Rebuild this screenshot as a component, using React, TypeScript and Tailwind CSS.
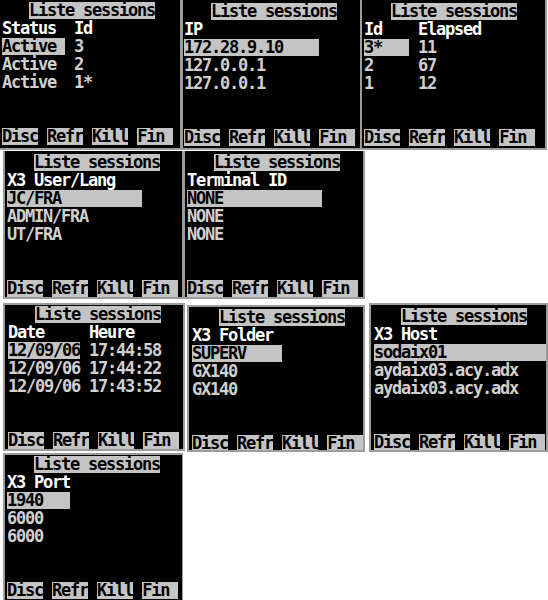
import React, { FC } from "react";

interface ScreenProps {
  header: string;
  rows: string[];
  hl: number;
  className: string;
}

const font = "font-['DejaVu_Sans_Mono',monospace] font-bold text-[17px] tracking-[-1.23px] whitespace-pre";

const Hl: FC<{ children: React.ReactNode }> = ({ children }) => (
  <span className="inline-block h-[17px] leading-[17px] bg-[#c4c4c4] text-black align-top">{children}</span>
);

const Screen: FC<ScreenProps> = ({ header, rows, hl, className }) => {
  return (
    <div className={"bg-black border-[#9c9c9c] overflow-hidden " + className}>
      <div className={"flex flex-col " + font}>
        <div className="h-[18px] leading-[17px]">
          {"   "}
          <Hl>Liste sessions</Hl>
        </div>
        <div className="h-[18px] leading-[17px] text-white">{header}</div>
        {rows.map((r, i) => (
          <div key={i} className="h-[18px] leading-[17px] text-[#d0d0d0]">
            {i === 0 ? (
              <>
                <Hl>{r.padEnd(hl, " ").slice(0, hl)}</Hl>
                {r.slice(hl)}
              </>
            ) : (
              r
            )}
          </div>
        ))}
        <div className="h-[18px]" />
        <div className="h-[18px]" />
        <div className="h-[18px] leading-[17px]">
          <Hl>Disc</Hl> <Hl>Refr</Hl> <Hl>Kill</Hl> <Hl>Fin </Hl>
        </div>
      </div>
    </div>
  );
};

export default function App() {
  return (
    <div className="w-[548px] h-[600px] bg-white overflow-hidden">
      <div className="flex h-[151px]">
        <Screen
          className="w-[182px] h-[150px] pl-[2px] pt-[2px] border-r-2 border-b-2"
          header="Status  Id"
          rows={["Active  3", "Active  2", "Active  1*"]}
          hl={7}
        />
        <Screen
          className="w-[179px] h-[150px] pl-[1px] pt-[3px] border-l border-r border-b-2"
          header="IP"
          rows={["172.28.9.10", "127.0.0.1", "127.0.0.1"]}
          hl={15}
        />
        <Screen
          className="w-[186px] h-[150px] pl-[2px] pt-[3px] border-l border-r-2 border-b-2"
          header="Id    Elapsed"
          rows={["3*    11", "2     67", "1     12"]}
          hl={5}
        />
      </div>
      <div className="flex h-[152px]">
        <Screen
          className="ml-[3px] w-[180px] h-[148px] pl-[2px] pt-[3px] border-l-2 border-r border-b-2"
          header="X3 User/Lang"
          rows={["JC/FRA", "ADMIN/FRA", "UT/FRA"]}
          hl={15}
        />
        <Screen
          className="w-[182px] h-[148px] pl-[2px] pt-[3px] border-l-2 border-r-2 border-b-2"
          header="Terminal ID"
          rows={["NONE", "NONE", "NONE"]}
          hl={15}
        />
      </div>
      <div className="flex items-start h-[150px]">
        <Screen
          className="ml-[3px] w-[182px] h-[148px] pl-[3px] pt-[1px] border-2"
          header="Date     Heure"
          rows={["12/09/06 17:44:58", "12/09/06 17:44:22", "12/09/06 17:43:52"]}
          hl={8}
        />
        <Screen
          className="ml-[2px] mt-[2px] w-[178px] h-[147px] pl-[3px] pt-[2px] border-2"
          header="X3 Folder"
          rows={["SUPERV", "GX140", "GX140"]}
          hl={10}
        />
        <Screen
          className="ml-[4px] w-[179px] h-[149px] pl-[3px] pt-[3px] border-2"
          header="X3 Host"
          rows={["sodaix01", "aydaix03.acy.adx", "aydaix03.acy.adx"]}
          hl={20}
        />
      </div>
      <div className="flex">
        <Screen
          className="ml-[3px] w-[180px] h-[148px] pl-[2px] pt-[1px] border-l-2 border-r border-t-2"
          header="X3 Port"
          rows={["1940", "6000", "6000"]}
          hl={7}
        />
      </div>
    </div>
  );
}
